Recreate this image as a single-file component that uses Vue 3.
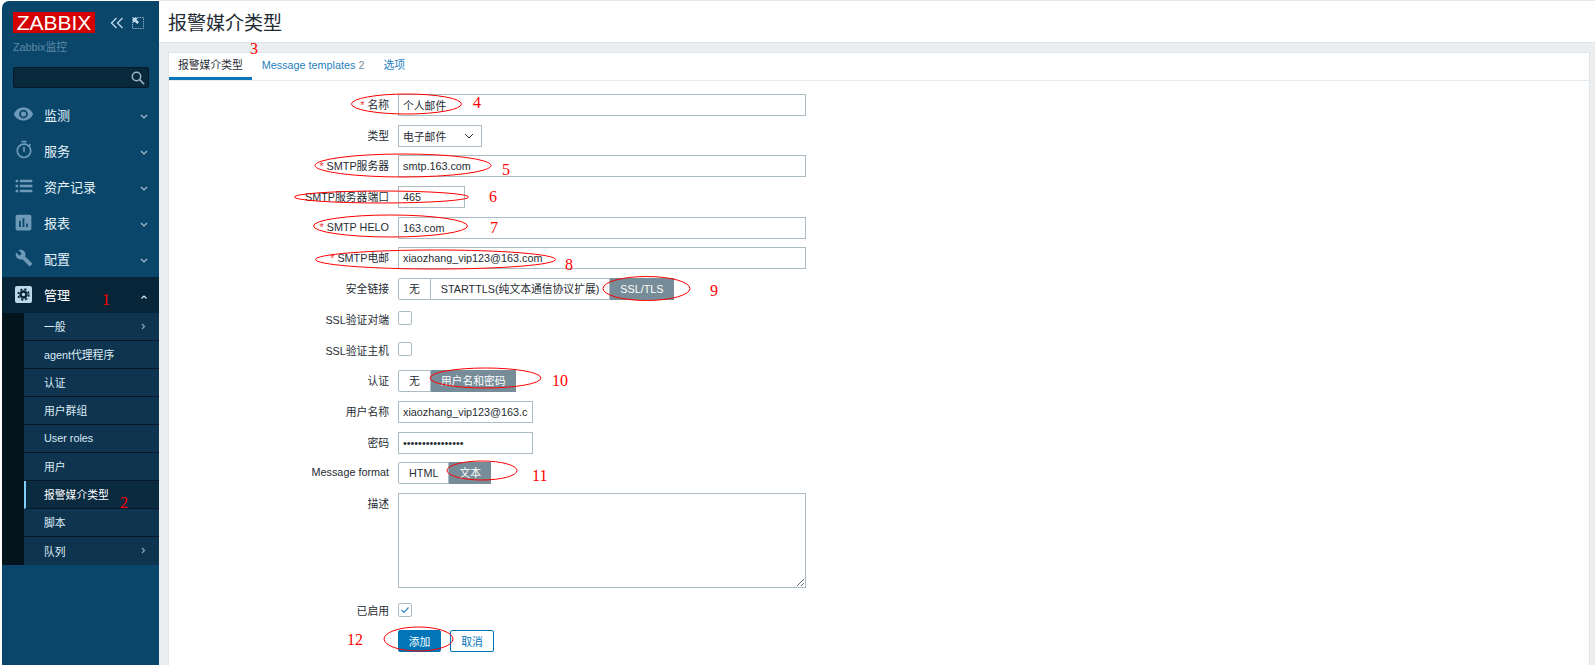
<script setup>
const d = {
  eye: 'M12 4.5C7 4.5 2.73 7.61 1 12c1.73 4.39 6 7.5 11 7.5s9.27-3.11 11-7.5c-1.73-4.39-6-7.5-11-7.5zM12 17c-2.76 0-5-2.24-5-5s2.24-5 5-5 5 2.24 5 5-2.24 5-5 5zm0-8c-1.66 0-3 1.34-3 3s1.34 3 3 3 3-1.34 3-3-1.34-3-3-3z',
  timer: 'M15 1H9v2h6V1zm-4 13h2V8h-2v6zm8.03-6.61l1.42-1.42c-.43-.51-.9-.99-1.41-1.41l-1.42 1.42C16.07 4.74 14.12 4 12 4c-4.97 0-9 4.03-9 9s4.02 9 9 9 9-4.03 9-9c0-2.12-.74-4.07-1.97-5.61zM12 20c-3.87 0-7-3.13-7-7s3.13-7 7-7 7 3.13 7 7-3.13 7-7 7z',
  list: 'M2 4.5h3v3H2zM7 4.5h15v3H7zM2 10.5h3v3H2zM7 10.5h15v3H7zM2 16.5h3v3H2zM7 16.5h15v3H7z',
  chart: 'M19 3H5c-1.1 0-2 .9-2 2v14c0 1.1.9 2 2 2h14c1.1 0 2-.9 2-2V5c0-1.1-.9-2-2-2zM9 17H7v-7h2v7zm4 0h-2V7h2v10zm4 0h-2v-4h2v4z',
  wrench: 'M22.7 19l-9.1-9.1c.9-2.3.4-5-1.5-6.9-2-2-5-2.4-7.4-1.3L9 6 6 9 1.6 4.7C.4 7.1.9 10.1 2.9 12.1c1.9 1.9 4.6 2.4 6.9 1.5l9.1 9.1c.4.4 1 .4 1.4 0l2.3-2.3c.5-.4.5-1.1.1-1.4z'
}
const menu = [
  { label: '监测', icon: d.eye, size: 22 },
  { label: '服务', icon: d.timer, size: 20 },
  { label: '资产记录', icon: d.list, size: 20 },
  { label: '报表', icon: d.chart, size: 21 },
  { label: '配置', icon: d.wrench, size: 18 }
]
const sub = [
  { label: '一般', more: true },
  { label: 'agent代理程序' },
  { label: '认证' },
  { label: '用户群组' },
  { label: 'User roles' },
  { label: '用户' },
  { label: '报警媒介类型', active: true },
  { label: '脚本' },
  { label: '队列', more: true }
]
const marks = [
  { cx: 406.5, cy: 104, rx: 55, ry: 10 },
  { cx: 403, cy: 165.5, rx: 88, ry: 11.5 },
  { cx: 381.5, cy: 197, rx: 87, ry: 6 },
  { cx: 390.5, cy: 226, rx: 77, ry: 11 },
  { cx: 435.5, cy: 259.5, rx: 120, ry: 9.5 },
  { cx: 646.5, cy: 288.5, rx: 43.5, ry: 12 },
  { cx: 485.5, cy: 378, rx: 55.5, ry: 10 },
  { cx: 482, cy: 470.5, rx: 35, ry: 9.5 },
  { cx: 418.5, cy: 639, rx: 34.5, ry: 12 }
]
const nums = [
  { t: '1', x: 102, y: 305 }, { t: '2', x: 120, y: 508 }, { t: '3', x: 250, y: 54 },
  { t: '4', x: 473, y: 108 }, { t: '5', x: 502, y: 175 }, { t: '6', x: 489, y: 202 },
  { t: '7', x: 490, y: 233 }, { t: '8', x: 565, y: 270 }, { t: '9', x: 710, y: 296 },
  { t: '10', x: 552, y: 386 }, { t: '11', x: 532, y: 481 }, { t: '12', x: 347, y: 645 }
]
</script>

<template>
  <div class="page">
    <aside class="side">
      <div class="brand">
        <div class="logo">ZABBIX</div>
        <svg class="tool tool-a" width="14" height="12" viewBox="0 0 14 12" fill="none" stroke="#b5d0e2" stroke-width="1.5">
          <path d="M6.5 1 1.5 6l5 5M12.5 1l-5 5 5 5" />
        </svg>
        <svg class="tool" width="12" height="12" viewBox="0 0 12 12" fill="none">
          <rect x=".5" y=".5" width="11" height="11" stroke="#8fb2c9" stroke-dasharray="1.4 1" />
          <path d="M1 1h5L4.4 2.6 7 5.2 5.2 7 2.6 4.4 1 6z" fill="#c4dbe9" />
        </svg>
      </div>
      <div class="server">Zabbix监控</div>
      <div class="search">
        <svg width="14" height="14" viewBox="0 0 14 14" fill="none" stroke="#9fb6c5" stroke-width="1.5">
          <circle cx="5.5" cy="5.5" r="4.2" /><path d="m8.6 8.6 4.6 4.6" />
        </svg>
      </div>
      <nav>
        <div v-for="m in menu" :key="m.label" class="item">
          <span class="ico">
            <svg :width="m.size" :height="m.size" viewBox="0 0 24 24" fill="#6e9ab8"><path :d="m.icon" fill-rule="evenodd" /></svg>
          </span>
          <span class="name">{{ m.label }}</span>
          <svg class="chev" width="8" height="6" viewBox="0 0 8 6" fill="none" stroke="#a9c3d4" stroke-width="1.1"><path d="m1 1 3 3 3-3" /></svg>
        </div>
        <div class="item item-on">
          <span class="ico">
            <svg width="17" height="17" viewBox="0 0 17 17">
              <rect width="17" height="17" rx="2" fill="#bcd8ea" />
              <circle cx="8.5" cy="8.5" r="4.2" fill="#0a2638" />
              <circle cx="8.5" cy="8.5" r="5.3" fill="none" stroke="#0a2638" stroke-width="1.8" stroke-dasharray="2.2 2" />
              <circle cx="8.5" cy="8.5" r="1.7" fill="#bcd8ea" />
            </svg>
          </span>
          <span class="name name-on">管理</span>
          <svg class="chev" width="8" height="6" viewBox="0 0 8 6" fill="none" stroke="#e3eef5" stroke-width="1.2"><path d="m1.5 4.5 2.5-2.5 2.5 2.5" /></svg>
        </div>
        <div class="subwrap">
          <div v-for="s in sub" :key="s.label" class="sub" :class="{ 'sub-on': s.active }">
            <span>{{ s.label }}</span>
            <svg v-if="s.more" class="arrow" width="5" height="7" viewBox="0 0 5 7" fill="none" stroke="#8ea9ba" stroke-width="1.1"><path d="m1 1 2.5 2.5L1 6" /></svg>
          </div>
        </div>
      </nav>
    </aside>

    <main class="main">
      <header class="head"><h1>报警媒介类型</h1></header>
      <section class="panel">
        <div class="tabs">
          <a class="tab tab-on">报警媒介类型</a>
          <a class="tab">Message templates <em>2</em></a>
          <a class="tab">选项</a>
        </div>
        <form class="form" @submit.prevent>
          <label class="lab"><i>*</i> 名称</label>
          <input class="inp wide" value="个人邮件" />
          <label class="lab">类型</label>
          <div class="sel">
            <span>电子邮件</span>
            <svg width="10" height="6" viewBox="0 0 10 6" fill="none" stroke="#1f2c33" stroke-width="1"><path d="m1 1 4 4 4-4" /></svg>
          </div>
          <label class="lab"><i>*</i> SMTP服务器</label>
          <input class="inp wide" value="smtp.163.com" />
          <label class="lab">SMTP服务器端口</label>
          <input class="inp port" value="465" />
          <label class="lab"><i>*</i> SMTP HELO</label>
          <input class="inp wide" value="163.com" />
          <label class="lab"><i>*</i> SMTP电邮</label>
          <input class="inp wide" value="xiaozhang_vip123@163.com" />
          <label class="lab">安全链接</label>
          <div class="seg"><span>无</span><span>STARTTLS(纯文本通信协议扩展)</span><span class="on">SSL/TLS</span></div>
          <label class="lab">SSL验证对端</label>
          <div class="cell"><span class="chk up"></span></div>
          <label class="lab">SSL验证主机</label>
          <div class="cell"><span class="chk up"></span></div>
          <label class="lab">认证</label>
          <div class="seg"><span>无</span><span class="on">用户名和密码</span></div>
          <label class="lab">用户名称</label>
          <input class="inp mid" value="xiaozhang_vip123@163.com" />
          <label class="lab">密码</label>
          <input class="inp mid" type="password" value="aaaaaaaaaaaaaaaa" />
          <label class="lab">Message format</label>
          <div class="seg"><span>HTML</span><span class="on">文本</span></div>
          <label class="lab lab-top">描述</label>
          <textarea class="area"></textarea>
          <label class="lab push">已启用</label>
          <div class="cell push">
            <span class="chk">
              <svg width="12" height="12" viewBox="0 0 12 12" fill="none" stroke="#2f88c5" stroke-width="1.2"><path d="m2.5 6 2.5 2.5 4.5-5" /></svg>
            </span>
          </div>
          <span></span>
          <div class="btns">
            <button class="btn btn-main">添加</button>
            <button class="btn">取消</button>
          </div>
        </form>
      </section>
    </main>

    <svg class="marks" width="1595" height="665" viewBox="0 0 1595 665" fill="none">
      <ellipse v-for="(e, i) in marks" :key="i" :cx="e.cx" :cy="e.cy" :rx="e.rx" :ry="e.ry" stroke="#f00" />
      <text v-for="n in nums" :key="n.t" :x="n.x" :y="n.y" class="num">{{ n.t }}</text>
    </svg>
  </div>
</template>

<style>
html, body { margin: 0; overflow: hidden; background: #fff; }
</style>

<style scoped>
.page {
  position: relative;
  display: flex;
  width: 1595px;
  height: 665px;
  padding-left: 2px;
  box-sizing: border-box;
  overflow: hidden;
  font: 10.8px "Liberation Sans", "Noto Sans CJK SC", sans-serif;
  color: #1f2c33;
}
.side {
  flex: 0 0 157px;
  background: #0a466a;
  border-top-left-radius: 7px;
  margin-top: 1px;
  display: flex;
  flex-direction: column;
}
.brand {
  display: flex;
  align-items: center;
  margin: 11px 0 0 11px;
  height: 21px;
}
.logo {
  width: 82px;
  height: 21px;
  background: #d40000;
  color: #fff;
  font-size: 21px;
  line-height: 21px;
  text-align: center;
}
.tool { margin-left: 8px; }
.tool-a { margin-left: 15px; }
.server {
  margin: 8px 0 0 11px;
  height: 13px;
  line-height: 13px;
  color: #5f8aa6;
}
.search {
  margin: 13px 10px 0 11px;
  height: 21px;
  background: #08283c;
  border: 1px solid #04192a;
  border-radius: 2px;
  box-sizing: border-box;
  display: flex;
  align-items: center;
  justify-content: flex-end;
  padding-right: 3px;
}
nav { margin-top: 9px; }
.item {
  height: 36px;
  box-sizing: border-box;
  padding-bottom: 2px;
  display: flex;
  align-items: center;
  position: relative;
}
.item-on { background: #072538; }
.ico {
  width: 21px;
  margin-left: 11px;
  display: flex;
  justify-content: center;
}
.name {
  margin-left: 10px;
  flex: 1;
  font-size: 13px;
  color: #e6f3fb;
}
.name-on { color: #fff; }
.chev { margin: 5px 11px 0 0; }
.subwrap {
  padding-left: 22px;
  background: #04141d;
}
.sub {
  height: 28px;
  box-sizing: border-box;
  padding: 0 13px 1px 20px;
  display: flex;
  align-items: center;
  justify-content: space-between;
  background: #0e3450;
  border-bottom: 1px solid #04182a;
  color: #dcebf4;
}
.sub:last-child { border-bottom: 0; height: 28px; }
.sub-on {
  background: #0a2a40;
  color: #fff;
  padding-left: 18px;
  border-left: 2px solid #7fcdfb;
}
.main {
  flex: 1;
  min-width: 0;
  background: #ebeef0;
  display: flex;
  flex-direction: column;
}
.head {
  flex: none;
  height: 43px;
  box-sizing: border-box;
  background: #fff;
  border-top: 1px solid #e4e7e9;
  border-bottom: 1px solid #dfe4e7;
  display: flex;
  align-items: center;
  padding-left: 9px;
}
h1 {
  margin: 0;
  font-size: 19px;
  font-weight: 400;
}
.panel {
  flex: 1;
  margin: 9px 5px 0 9px;
  background: #fff;
  border: 1px solid #e1e5e8;
  border-bottom: 0;
}
.tabs {
  height: 27px;
  display: flex;
  gap: 1px;
  border-bottom: 1px solid #e6eaec;
}
.tab {
  display: block;
  height: 27px;
  box-sizing: border-box;
  padding: 5px 9px 0;
  color: #1f7fc0;
  line-height: 14px;
}
.tab em { font-style: normal; color: #768d99; }
.tab-on {
  color: #1f2c33;
  border-bottom: 3px solid #0a75b8;
}
.form {
  display: grid;
  grid-template-columns: 220px 1fr;
  column-gap: 9px;
  row-gap: 8.7px;
  padding-top: 13px;
  align-items: center;
  justify-items: start;
}
.lab {
  justify-self: end;
  white-space: nowrap;
  margin-top: -2px;
}
.lab i {
  font-style: normal;
  color: #e33;
}
.lab-top { align-self: start; margin-top: 2px; }
.inp, .sel, .area {
  height: 22px;
  box-sizing: border-box;
  border: 1px solid #acbbc4;
  border-radius: 0;
  background: #fff;
  color: #1f2c33;
  font: inherit;
  padding: 0 4px;
  outline: 0;
  display: block;
}
.wide { width: 408px; }
.port { width: 67px; }
.mid { width: 135px; }
.sel {
  width: 84px;
  display: flex;
  align-items: center;
  justify-content: space-between;
  padding: 0 7px 0 4px;
}
.area {
  width: 408px;
  height: 95px;
}
.seg {
  display: flex;
  height: 22px;
  box-sizing: border-box;
  border: 1px solid #acbbc4;
  border-radius: 2px;
}
.seg span {
  padding: 0 10px;
  line-height: 20px;
  border-right: 1px solid #acbbc4;
}
.seg span:last-child { border-right: 0; }
.seg .on {
  background: #768d99;
  color: #fff;
  margin: -1px -1px -1px 0;
  line-height: 22px;
}
.cell { height: 22px; display: flex; align-items: center; }
.chk {
  width: 14px;
  height: 14px;
  box-sizing: border-box;
  border: 1px solid #acbbc4;
  border-radius: 2px;
  display: flex;
  align-items: center;
  justify-content: center;
}
.up { margin-top: -3px; }
.push { margin-top: 2.5px; }
.btns { display: flex; gap: 9px; }
.btn {
  height: 22px;
  width: 44px;
  box-sizing: border-box;
  border: 1px solid #0275b8;
  border-radius: 2px;
  background: #fff;
  color: #0275b8;
  font: inherit;
  padding: 0;
}
.btn-main {
  width: 43px;
  background: #0275b8;
  color: #fff;
}
.marks {
  position: absolute;
  left: 0;
  top: 0;
  pointer-events: none;
}
.num {
  font: 16px "Liberation Serif", serif;
  fill: #f00;
  stroke: none;
}
</style>
